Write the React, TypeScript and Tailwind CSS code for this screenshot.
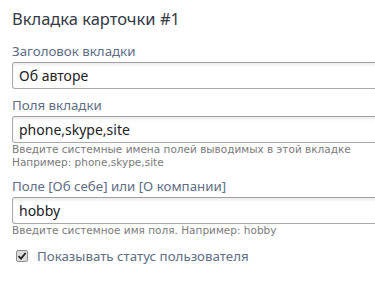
const font = { fontFamily: '"Noto Sans", "Open Sans", sans-serif' };

function Field({ value }: { value: string }) {
  return (
    <div className="h-[27px] w-[420px] rounded-[3px] border border-[#aaa] border-t-[#a0a0a0] bg-white pl-[6px] text-[14px] leading-[25px] text-[#222] shadow-[inset_0_2px_3px_rgba(0,0,0,0.08)]">
      {value}
    </div>
  );
}

function Hint({ children }: { children: React.ReactNode }) {
  return (
    <div
      className="text-[10.5px] leading-[13px] text-[#7a7a7a]"
      style={{ fontFamily: '"DejaVu Sans", Verdana, sans-serif' }}
    >
      {children}
    </div>
  );
}

export default function App() {
  return (
    <div className="h-[282px] w-[375px] overflow-hidden bg-white pl-3 pt-[8px]" style={font}>
      <h3 className="text-[16.5px] leading-[22px] text-[#333a44]">Вкладка карточки #1</h3>

      <div className="mt-[12px] text-[13.3px] leading-[18px] text-[#5e6e84]">Заголовок вкладки</div>
      <div className="mt-[2px]">
        <Field value="Об авторе" />
      </div>

      <div className="mt-[7px] text-[13.3px] leading-[18px] text-[#5e6e84]">Поля вкладки</div>
      <div className="mt-[2px]">
        <Field value="phone,skype,site" />
      </div>
      <div className="mt-[0px]">
        <Hint>Введите системные имена полей выводимых в этой вкладке</Hint>
        <Hint>Например: phone,skype,site</Hint>
      </div>

      <div className="mt-[8px] text-[13.3px] leading-[18px] text-[#5e6e84]">
        Поле [Об себе] или [О компании]
      </div>
      <div className="mt-[2px]">
        <Field value="hobby" />
      </div>
      <div className="mt-[0px]">
        <Hint>Введите системное имя поля. Например: hobby</Hint>
      </div>

      <label className="mt-[10px] flex items-center gap-[9px] pl-[4px] text-[13.3px] leading-[18px] text-[#5e6e84]">
        <span className="flex h-[12px] w-[12px] items-center justify-center rounded-[2px] border border-[#8f8f8f] bg-[#dcdcdc]">
          <svg width="10" height="10" viewBox="0 0 10 10">
            <path d="M1.5 5.2 L4 7.6 L8.6 2" fill="none" stroke="#222" strokeWidth="1.8" />
          </svg>
        </span>
        Показывать статус пользователя
      </label>
    </div>
  );
}
